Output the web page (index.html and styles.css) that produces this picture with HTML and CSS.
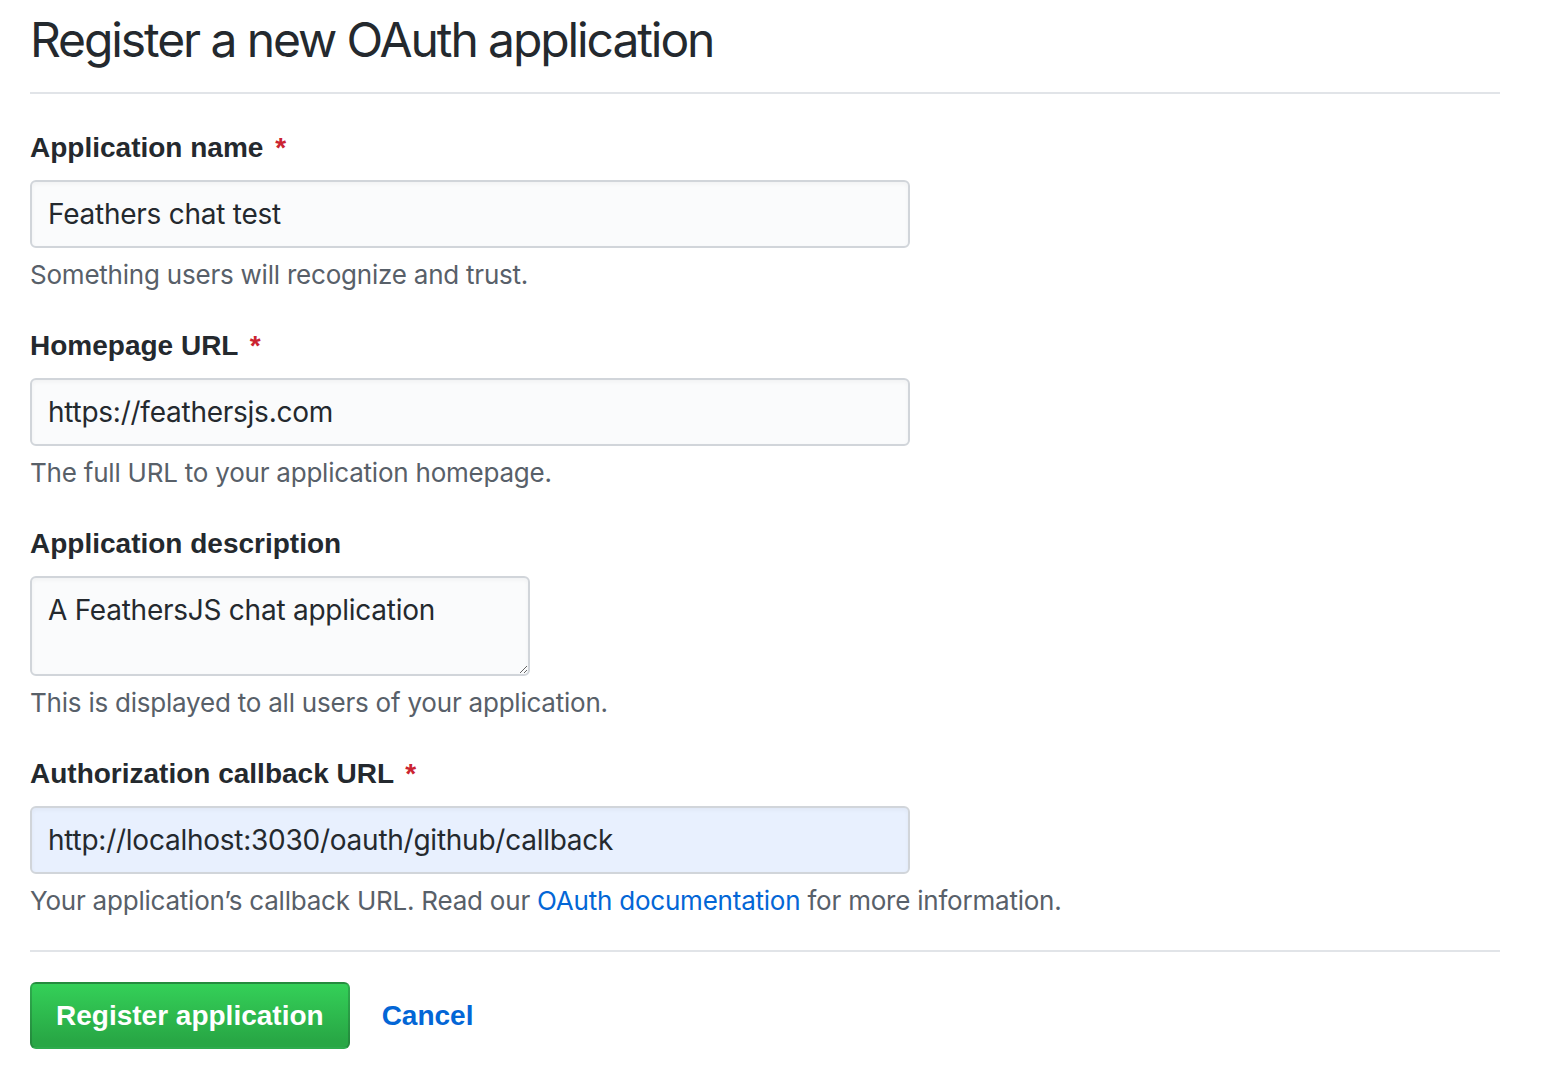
FILE: index.html
```html
<!DOCTYPE html>
<html lang="en">
<head>
<meta charset="utf-8">
<title>Register a new OAuth application</title>
<link rel="stylesheet" href="styles.css">
</head>
<body>
<div class="page">
  <div class="subhead">
    <h1 class="subhead-heading">Register a new OAuth application</h1>
  </div>
  <form class="form">
    <div class="form-group first">
      <label class="label">Application name <span class="req">*</span></label>
      <input class="input" type="text" value="Feathers chat test">
      <p class="note">Something users will recognize and trust.</p>
    </div>
    <div class="form-group">
      <label class="label">Homepage URL <span class="req">*</span></label>
      <input class="input" type="text" value="https://feathersjs.com">
      <p class="note">The full URL to your application homepage.</p>
    </div>
    <div class="form-group">
      <label class="label">Application description</label>
      <textarea class="textarea">A FeathersJS chat application</textarea>
      <p class="note">This is displayed to all users of your application.</p>
    </div>
    <div class="form-group">
      <label class="label">Authorization callback URL <span class="req">*</span></label>
      <input class="input autofill" type="text" value="http://localhost:3030/oauth/github/callback">
      <p class="note">Your application’s callback URL. Read our <a class="link" href="#">OAuth documentation</a> for more information.</p>
    </div>
    <div class="actions">
      <button class="btn-primary" type="button">Register application</button>
      <a class="cancel" href="#">Cancel</a>
    </div>
  </form>
</div>
</body>
</html>
```
FILE: styles.css
```css
* { box-sizing: border-box; }
html, body { margin: 0; padding: 0; background: #fff; }
body {
  font-family: "Liberation Sans", Arial, sans-serif;
  color: #24292e;
}
.page {
  width: 1470px;
  margin-left: 30px;
}
.subhead {
  padding-top: 10px;
  padding-bottom: 22px;
  border-bottom: 2px solid #e1e4e8;
}
.subhead-heading {
  margin: 0;
  font-family: Inter, "Liberation Sans", sans-serif;
  font-size: 48px;
  line-height: 60px;
  font-weight: 400;
  letter-spacing: -2.1px;
}
.form { display: block; }
.form-group { margin-top: 33px; }
.form-group.first { margin-top: 34px; }
.label {
  display: block;
  font-size: 28px;
  line-height: 40px;
  font-weight: 700;
  margin-bottom: 12px;
}
.req { color: #cb2431; margin-left: 4px; }
.input, .textarea {
  display: block;
  width: 880px;
  height: 68px;
  padding: 0 16px;
  font-family: Inter, "Liberation Sans", sans-serif;
  font-size: 28px;
  letter-spacing: -0.25px;
  color: #24292e;
  background: #fafbfc;
  border: 2px solid #d1d5da;
  border-radius: 6px;
  box-shadow: inset 0 2px 4px rgba(27,31,35,.04);
  outline: none;
}
.textarea {
  width: 500px;
  height: 100px;
  padding: 12px 16px;
  line-height: 40px;
  resize: vertical;
}
.autofill { background: #e8f0fe; }
.note {
  margin: 9px 0 0;
  font-family: Inter, "Liberation Sans", sans-serif;
  font-size: 26px;
  line-height: 36px;
  letter-spacing: -0.22px;
  color: #586069;
}
.link { color: #0366d6; text-decoration: none; }
.actions {
  margin-top: 31px;
  border-top: 2px solid #e1e4e8;
  padding-top: 30px;
  display: flex;
  align-items: center;
  gap: 32px;
}
.btn-primary {
  height: 67px;
  padding: 0 24px;
  font-family: inherit;
  font-size: 28px;
  font-weight: 700;
  color: #fff;
  background: linear-gradient(-180deg, #34d058 0%, #28a745 90%);
  border: 2px solid rgba(27,31,35,.2);
  border-radius: 6px;
}
.cancel {
  font-size: 28px;
  font-weight: 700;
  color: #0366d6;
  text-decoration: none;
}
```
